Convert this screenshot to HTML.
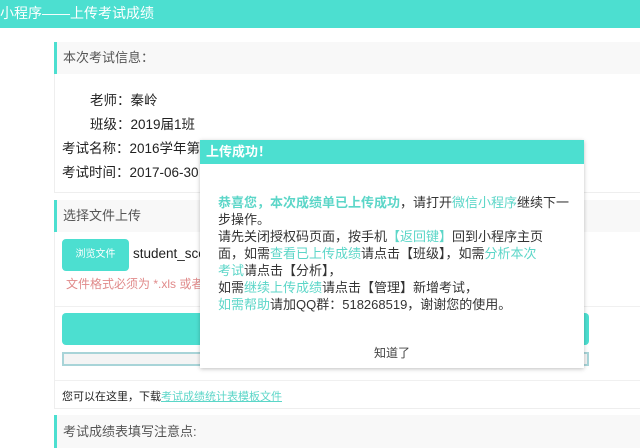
<!DOCTYPE html>
<html><head><meta charset="utf-8"><style>
*{margin:0;padding:0;box-sizing:border-box}
body{width:640px;height:448px;overflow:hidden;background:#fff;font-family:"Liberation Sans","Noto Sans CJK SC",sans-serif;font-size:13px;color:#333;position:relative}
.hdr{position:absolute;left:0;top:0;width:640px;height:28px;background:#4cdfd0;color:#fff;font-size:14px;line-height:26px;padding-left:0}
.pnl{position:absolute;left:54px;right:0;border-left:3px solid #4cdfd0;background:#f8f8f8;color:#555;font-size:13px;padding-left:6px}
.box{position:absolute;left:54px;right:0;border:1px solid #eee;border-right:none}
.t{position:absolute;font-size:13.5px;color:#222}
.teal{color:#5cd6c8}
.modal{position:absolute;left:200px;top:140px;width:384px;height:228px;background:#fff;box-shadow:0 1px 4px rgba(0,0,0,.25)}
.mh{height:24px;background:#4cdfd0;color:#fff;font-weight:bold;font-size:13px;line-height:24px;padding-left:6px}
.mb{position:absolute;left:18px;top:54px;width:370px;line-height:17px;font-size:13px;color:#333;white-space:nowrap}
</style></head><body>
<div class="hdr">小程序——上传考试成绩</div>
<div class="box" style="top:42px;height:151px"></div>
<div class="pnl" style="top:42px;height:32px;line-height:32px">本次考试信息：</div>
<div class="t" style="left:90px;top:89px">老师：秦岭</div>
<div class="t" style="left:90px;top:113px">班级：2019届1班</div>
<div class="t" style="left:62px;top:137px">考试名称：2016学年第一学期</div>
<div class="t" style="left:62px;top:161px">考试时间：2017-06-30</div>
<div class="box" style="top:200px;height:209px"></div>
<div class="pnl" style="top:200px;height:32px;line-height:32px">选择文件上传</div>
<div style="position:absolute;left:62px;top:239px;width:67px;height:32px;background:#4cdfd0;border-radius:4px;color:#fff;font-size:10px;text-align:center;line-height:32px">浏览文件</div>
<div class="t" style="left:133px;top:246px">student_score.xls</div>
<div class="t" style="left:66px;top:275px;color:#e08a8a;font-size:12px">文件格式必须为 *.xls 或者 *.xlsx</div>
<div style="position:absolute;left:55px;right:0;top:306px;border-top:1px solid #f0f0f0"></div>
<div style="position:absolute;left:62px;width:527px;top:313px;height:32px;background:#4cdfd0;border-radius:4px"></div>
<div style="position:absolute;left:62px;width:527px;top:352px;height:14px;border:2px solid #a8d4d8;background:#f4f4f4"></div>
<div style="position:absolute;left:55px;right:0;top:380px;border-top:1px solid #f0f0f0"></div>
<div class="t" style="left:62px;top:388px;font-size:11px">您可以在这里，下载<span class="teal" style="text-decoration:underline">考试成绩统计表模板文件</span></div>
<div class="pnl" style="top:415px;height:33px;line-height:33px">考试成绩表填写注意点:</div>
<div class="modal"><div class="mh">上传成功！</div>
<div class="mb"><b class="teal">恭喜您，本次成绩单已上传成功</b>，请打开<span class="teal">微信小程序</span>继续下一<br>步操作。<br>请先关闭授权码页面，按手机<span class="teal">【返回键】</span>回到小程序主页<br>面，如需<span class="teal">查看已上传成绩</span>请点击【班级】，如需<span class="teal">分析本次</span><br><span class="teal">考试</span>请点击【分析】，<br>如需<span class="teal">继续上传成绩</span>请点击【管理】新增考试，<br><span class="teal">如需帮助</span>请加QQ群：518268519，谢谢您的使用。</div>
<div style="position:absolute;left:0;width:384px;top:204px;text-align:center;font-size:12px;color:#444">知道了</div>
</div>
</body></html>
